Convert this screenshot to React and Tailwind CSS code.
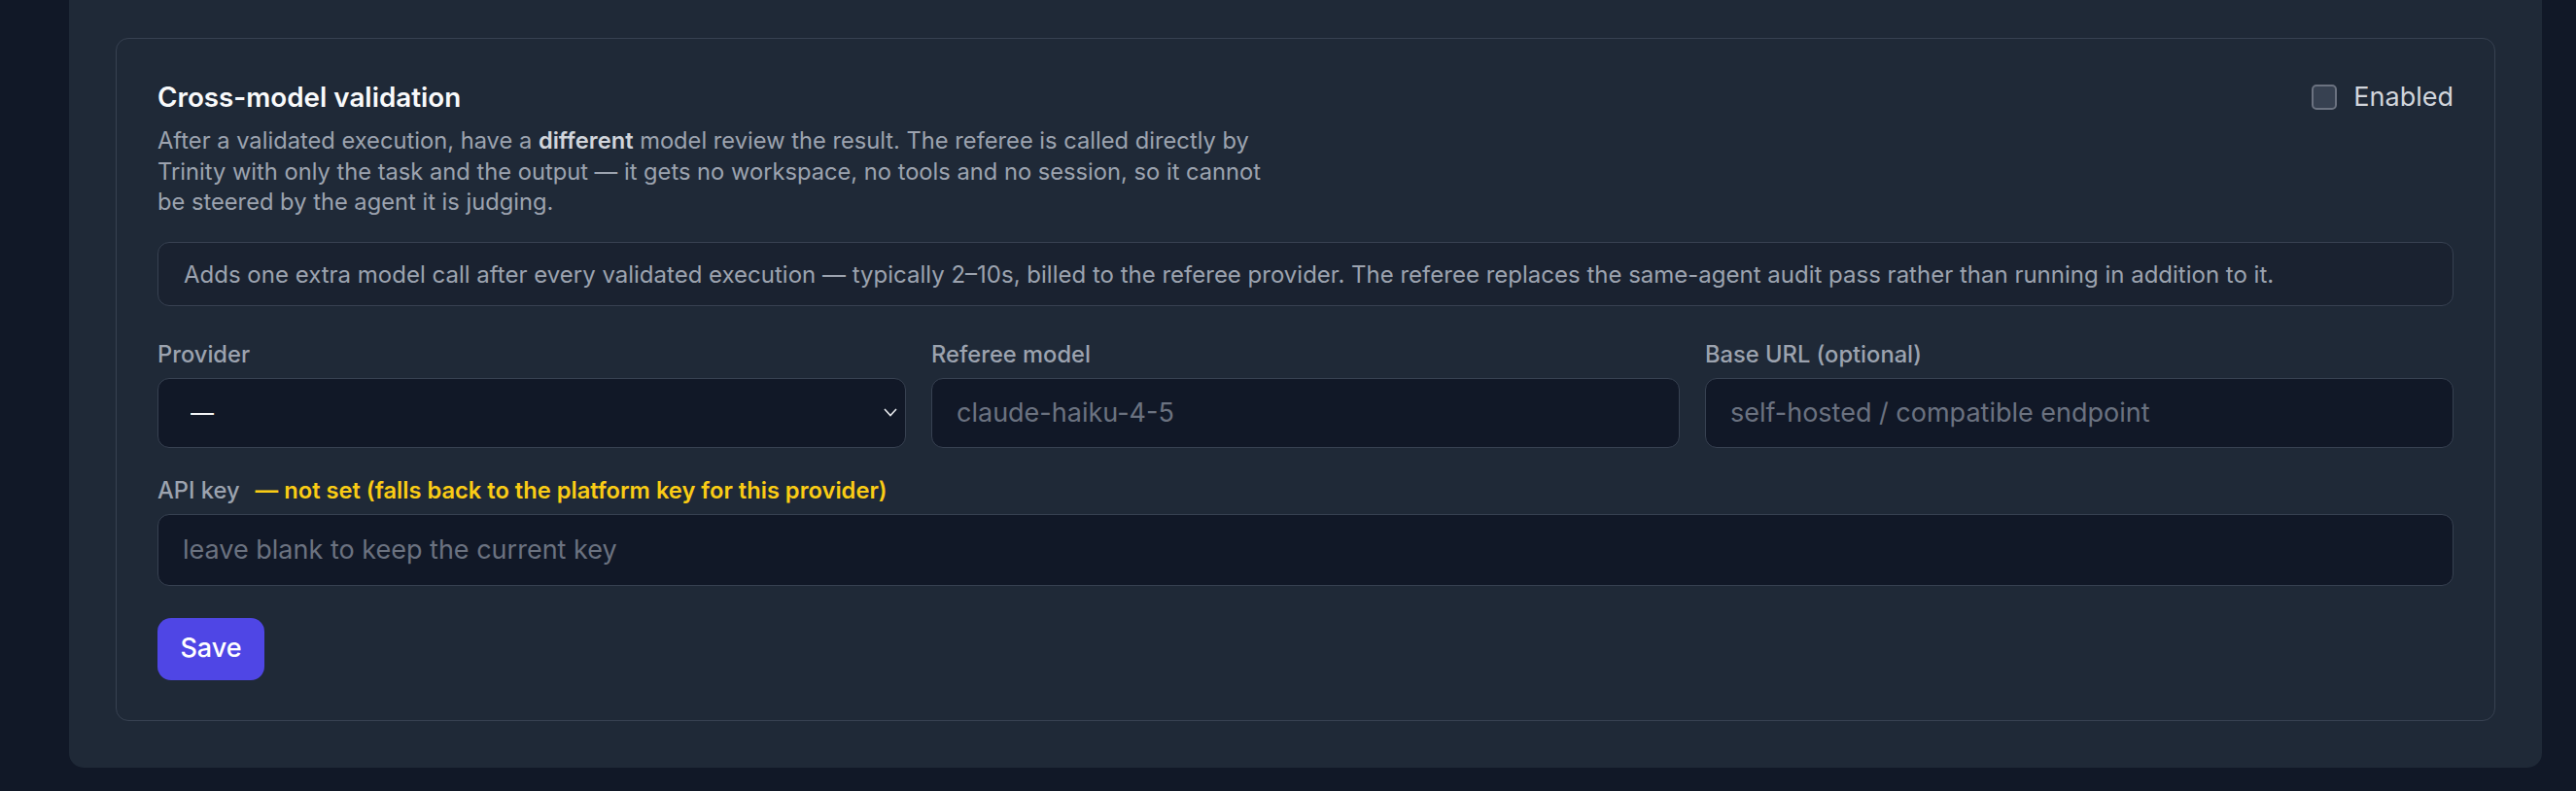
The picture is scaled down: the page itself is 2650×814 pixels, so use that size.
import { useState } from "react";

const font = { fontFamily: "Inter, 'Noto Sans', sans-serif" };

function Field({ label, children }) {
    return (
        <div className="flex flex-col">
            <label className="text-[23.7px] leading-[30px] font-medium text-[#9ca3af]">{label}</label>
            <div className="mt-[9px]">{children}</div>
        </div>
    );
}

function TextInput({ placeholder, tall }) {
    return (
        <input
            type="text"
            placeholder={placeholder}
            className={
                "block w-full rounded-[12px] border border-[#374151] bg-[#111827] px-[25px] text-[27px] text-[#e5e7eb] placeholder:text-[#6b7280] outline-none " +
                (tall ? "h-[74px]" : "h-[72px]")
            }
        />
    );
}

export default function App() {
    const [enabled, setEnabled] = useState(false);

    return (
        <div className="min-h-screen bg-[#111827] pb-[25px]" style={font}>
            <section className="ml-[71px] w-[2544px] rounded-b-[15px] bg-[#1f2937] px-[48px] pt-[39px] pb-[48px]">
                <div className="rounded-[13px] border border-[#374151] px-[42px] pt-[42px] pb-[41px]">
                    {/* header */}
                    <div className="flex items-start justify-between">
                        <div>
                            <h3 className="text-[27.8px] leading-[36px] font-semibold text-[#f9fafb]">Cross-model validation</h3>
                            <p className="mt-[11px] max-w-[1160px] text-[23.7px] leading-[31.5px] text-[#9ca3af]">
                                After a validated execution, have a <span className="font-semibold text-[#d1d5db]">different</span> model review the result. The referee is called directly by Trinity with only the task and the output — it gets no workspace, no tools and no session, so it cannot be steered by the agent it is judging.
                            </p>
                        </div>
                        <label className="flex h-[36px] items-center gap-[17px] text-[27px] text-[#d1d5db]">
                            <input
                                type="checkbox"
                                checked={enabled}
                                onChange={(e) => setEnabled(e.target.checked)}
                                className="h-[26px] w-[26px] appearance-none rounded-[5px] border-2 border-[#6b7280] bg-[#374151]"
                            />
                            Enabled
                        </label>
                    </div>

                    {/* cost note */}
                    <div className="mt-[25px] rounded-[12px] border border-[#374151] bg-[#1a2230] px-[26px] pt-[17px] pb-[15px] text-[24px] leading-[32px] text-[#9ca3af]">
                        Adds one extra model call after every validated execution — typically 2–10s, billed to the referee provider. The referee replaces the same-agent audit pass rather than running in addition to it.
                    </div>

                    <div className="mt-[35px] grid grid-cols-3 gap-x-[26px]">
                        <Field label="Provider">
                            <div className="relative">
                                <select className="block h-[72px] w-full appearance-none rounded-[12px] border border-[#374151] bg-[#111827] pl-[33px] text-[24px] text-[#f3f4f6] outline-none">
                                    <option>—</option>
                                </select>
                                <svg className="pointer-events-none absolute right-[9px] top-[31px]" width="14" height="9" viewBox="0 0 14 9" fill="none">
                                    <path d="M1 1l6 6.5L13 1" stroke="#e5e7eb" strokeWidth="1.6" />
                                </svg>
                            </div>
                        </Field>
                        <Field label="Referee model">
                            <TextInput placeholder="claude-haiku-4-5" />
                        </Field>
                        <Field label="Base URL (optional)">
                            <TextInput placeholder="self-hosted / compatible endpoint" />
                        </Field>
                    </div>

                    <div className="mt-[29px]">
                        <div className="text-[23.7px] leading-[30px]">
                            <span className="font-medium text-[#9ca3af]">API key</span>
                            <span className="ml-[16px] font-semibold text-[#facc15]">— not set (falls back to the platform key for this provider)</span>
                        </div>
                        <div className="mt-[9px]">
                            <TextInput tall placeholder="leave blank to keep the current key" />
                        </div>
                    </div>

                    <button className="mt-[33px] h-[64px] w-[110px] rounded-[14px] bg-[#4f46e5] text-[27px] font-medium text-white">
                        Save
                    </button>
                </div>
            </section>
        </div>
    );
}
